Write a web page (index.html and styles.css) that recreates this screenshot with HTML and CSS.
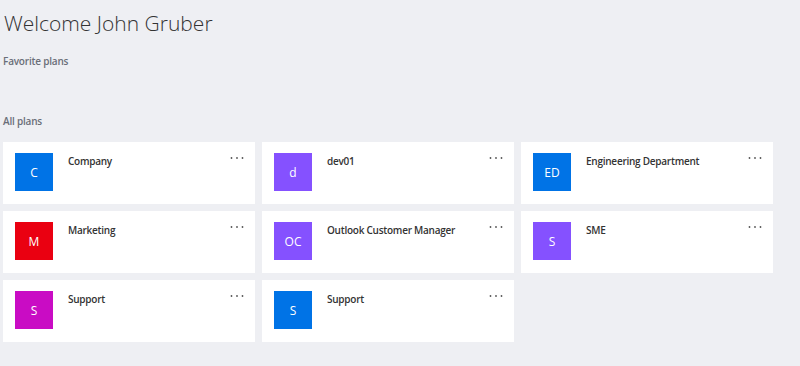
FILE: index.html
```html
<!DOCTYPE html>
<html lang="en">
  <head>
    <meta charset="UTF-8" />
    <meta name="viewport" content="width=device-width, initial-scale=1.0" />
    <title>Plans</title>
    <link rel="stylesheet" href="styles.css">
  </head>
  <body>
    <div class="page">
      <h1>Welcome John Gruber</h1>

      <h3 class="section-title">Favorite plans</h3>
      <div class="favorites"></div>

      <h3 class="section-title">All plans</h3>
      <div class="plans">
        <div class="plan">
          <div class="plan-icon blue">C</div>
          <div class="plan-name">Company</div>
          <svg class="plan-more" width="14" height="4" viewBox="0 0 14 4"><circle cx="1.5" cy="2" r="0.9"/><circle cx="7" cy="2" r="0.9"/><circle cx="12.5" cy="2" r="0.9"/></svg>
        </div>
        <div class="plan">
          <div class="plan-icon purple">d</div>
          <div class="plan-name">dev01</div>
          <svg class="plan-more" width="14" height="4" viewBox="0 0 14 4"><circle cx="1.5" cy="2" r="0.9"/><circle cx="7" cy="2" r="0.9"/><circle cx="12.5" cy="2" r="0.9"/></svg>
        </div>
        <div class="plan">
          <div class="plan-icon blue">ED</div>
          <div class="plan-name">Engineering Department</div>
          <svg class="plan-more" width="14" height="4" viewBox="0 0 14 4"><circle cx="1.5" cy="2" r="0.9"/><circle cx="7" cy="2" r="0.9"/><circle cx="12.5" cy="2" r="0.9"/></svg>
        </div>
        <div class="plan">
          <div class="plan-icon red">M</div>
          <div class="plan-name">Marketing</div>
          <svg class="plan-more" width="14" height="4" viewBox="0 0 14 4"><circle cx="1.5" cy="2" r="0.9"/><circle cx="7" cy="2" r="0.9"/><circle cx="12.5" cy="2" r="0.9"/></svg>
        </div>
        <div class="plan">
          <div class="plan-icon purple">OC</div>
          <div class="plan-name">Outlook Customer Manager</div>
          <svg class="plan-more" width="14" height="4" viewBox="0 0 14 4"><circle cx="1.5" cy="2" r="0.9"/><circle cx="7" cy="2" r="0.9"/><circle cx="12.5" cy="2" r="0.9"/></svg>
        </div>
        <div class="plan">
          <div class="plan-icon purple">S</div>
          <div class="plan-name">SME</div>
          <svg class="plan-more" width="14" height="4" viewBox="0 0 14 4"><circle cx="1.5" cy="2" r="0.9"/><circle cx="7" cy="2" r="0.9"/><circle cx="12.5" cy="2" r="0.9"/></svg>
        </div>
        <div class="plan">
          <div class="plan-icon magenta">S</div>
          <div class="plan-name">Support</div>
          <svg class="plan-more" width="14" height="4" viewBox="0 0 14 4"><circle cx="1.5" cy="2" r="0.9"/><circle cx="7" cy="2" r="0.9"/><circle cx="12.5" cy="2" r="0.9"/></svg>
        </div>
        <div class="plan">
          <div class="plan-icon blue">S</div>
          <div class="plan-name">Support</div>
          <svg class="plan-more" width="14" height="4" viewBox="0 0 14 4"><circle cx="1.5" cy="2" r="0.9"/><circle cx="7" cy="2" r="0.9"/><circle cx="12.5" cy="2" r="0.9"/></svg>
        </div>
      </div>
    </div>
  </body>
</html>
```

FILE: styles.css
```css
* {
  margin: 0;
  padding: 0;
  box-sizing: border-box;
  font-family: "Open Sans", "Noto Sans", sans-serif;
}

body {
  background: #eeeff3;
  color: #333;
}

.page {
  padding: 9px 3px 0;
}

h1 {
  font-size: 21px;
  font-weight: 300;
  color: #333;
  line-height: 28px;
  padding-left: 1px;
}

.section-title {
  font-size: 10px;
  font-weight: 600;
  color: #6a6e78;
  line-height: 14px;
  letter-spacing: -0.2px;
}

h1 + .section-title {
  margin-top: 17px;
}

.favorites {
  height: 46px;
}

.plans {
  margin-top: 14px;
  display: grid;
  grid-template-columns: repeat(3, 252px);
  grid-auto-rows: 62px;
  gap: 7px;
}

.plan {
  background: #fff;
  display: flex;
  align-items: flex-start;
  padding: 11px 12px;
}

.plan-icon {
  width: 38px;
  height: 38px;
  flex: none;
  display: flex;
  align-items: center;
  justify-content: center;
  color: #fff;
  font-size: 12px;
  line-height: 1;
  padding-top: 2px;
}

.blue {
  background: #0073e6;
}

.purple {
  background: #8551ff;
}

.red {
  background: #ea0011;
}

.magenta {
  background: #c90cc4;
}

.plan-name {
  flex: 1;
  margin-left: 15px;
  font-size: 10px;
  font-weight: 600;
  color: #333;
  line-height: 16px;
  letter-spacing: -0.25px;
}

.plan-more {
  fill: #555;
  margin-top: 3px;
  margin-right: -1px;
}
```
